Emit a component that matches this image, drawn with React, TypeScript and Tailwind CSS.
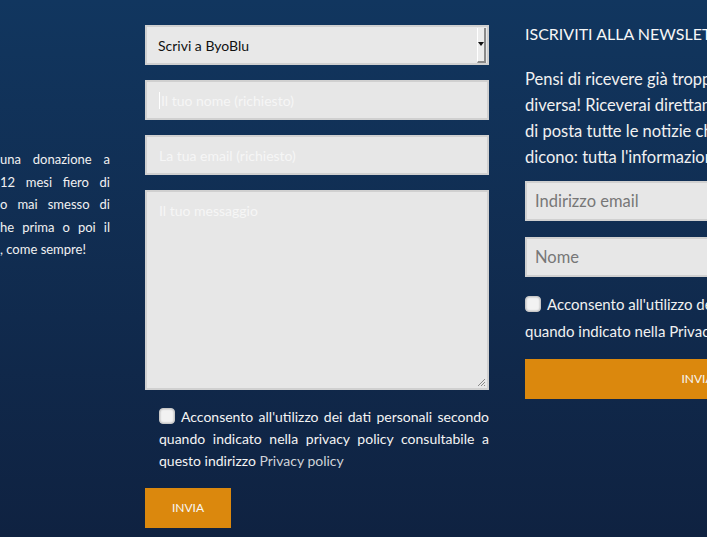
import React from "react";

const font = { fontFamily: "Lato, 'Open Sans', sans-serif" };

const Box = () => (
  <span className="inline-block w-[16px] h-[16px] rounded-[4px] bg-[#f2f2f2] border border-[#c8c8c8] shadow-[inset_0_0_2px_rgba(0,0,0,0.35)] align-[-2px] mr-[6px]" />
);

// each line: hidden start (runs off the left edge) + visible, justified end
const leftLines: [string, string[]][] = [
  ["Puoi sostenere Byoblu con", ["una", "donazione", "a"]],
  ["partire da pochi euro o per", ["12", "mesi", "fiero", "di"]],
  ["una voce libera che non h", ["o", "mai", "smesso", "di"]],
  ["informarti. Sappi anc", ["he", "prima", "o", "poi", "il"]],
];

const App = () => {
  return (
    <div
      className="w-[707px] h-[537px] overflow-hidden bg-gradient-to-b from-[#11365f] to-[#0f2241] text-white"
      style={font}
    >
      <div className="flex ml-[-150px]">
        {/* left column - donation text */}
        <div className="w-[260px] shrink-0 pt-[148px] text-[13px] leading-[22.5px] text-[#f1f1f1]">
          {leftLines.map(([pre, words]) => (
            <div key={pre} className="flex">
              <span className="w-[150px] whitespace-nowrap overflow-hidden text-right">{pre}</span>
              <span className="w-[110px] flex justify-between">
                {words.map((w, i) => (
                  <span key={i}>{w}</span>
                ))}
              </span>
            </div>
          ))}
          <div className="flex">
            <span className="w-[150px] whitespace-nowrap overflow-hidden text-right">tornerà a te</span>
            <span className="whitespace-nowrap">, come sempre!</span>
          </div>
        </div>

        {/* middle column - contact form */}
        <div className="ml-[35px] w-[344px] shrink-0 pt-[25px] flex flex-col">
          <div className="h-[40px] bg-[#e8e8e8] border-2 border-[#d0d0d0] flex items-center justify-between pl-[11px] pr-[1px]">
            <span className="text-[14px] text-[#111]">Scrivi a ByoBlu</span>
            <span className="w-[9px] h-[35px] bg-[#ececec] border-r-2 border-b-2 border-[#8a8a8a] border-l border-l-white flex items-center justify-center">
              <span className="w-0 h-0 border-l-[3px] border-r-[3px] border-t-[4px] border-l-transparent border-r-transparent border-t-[#111]" />
            </span>
          </div>
          <div className="mt-[15px] h-[40px] bg-[#e7e7e7] border-2 border-[#d0d0d0] flex items-center pl-[12px] text-[14px] text-[#f6f6f6]">
            <span className="w-[1px] h-[17px] bg-white mr-[1px]" />
            Il tuo nome (richiesto)
          </div>
          <div className="mt-[15px] h-[40px] bg-[#e7e7e7] border-2 border-[#d0d0d0] flex items-center pl-[12px] text-[14px] text-[#f6f6f6]">
            La tua email (richiesto)
          </div>
          <div className="mt-[15px] h-[200px] bg-[#e7e7e7] border-2 border-[#d0d0d0] pl-[12px] pt-[8px] text-[14px] text-[#f6f6f6] flex flex-col justify-between pr-[1px] pb-[1px]">
            <span>Il tuo messaggio</span>
            <svg className="self-end" width="10" height="10" viewBox="0 0 10 10">
              <path d="M9 2 L2 9 M9 5 L5 9 M9 8 L8 9" stroke="#8a8a8a" strokeWidth="1" />
            </svg>
          </div>
          <p className="mt-[16px] pl-[14px] text-[14px] leading-[22px] text-justify text-[#f4f4f4]">
            <Box />
            Acconsento all'utilizzo dei dati personali secondo quando indicato nella privacy policy consultabile a
            questo indirizzo <span className="text-[#cfd3d8]">Privacy policy</span>
          </p>
          <div className="mt-[16px] w-[86px] h-[40px] bg-[#db880d] flex items-center justify-center text-[12px] text-[#f6f6f6]">
            INVIA
          </div>
        </div>

        {/* right column - newsletter */}
        <div className="ml-[36px] w-[345px] shrink-0 pt-[24px]">
          <h3 className="text-[16px] leading-[20px] text-[#f6f6f6] whitespace-nowrap">ISCRIVITI ALLA NEWSLETTER</h3>
          <p className="mt-[22px] text-[16.5px] leading-[26px] text-[#f1f1f1] whitespace-nowrap">
            Pensi di ricevere già troppe email? La nostra è
            <br />
            diversa! Riceverai direttamente nella tua casella
            <br />
            di posta tutte le notizie che gli altri non ti
            <br />
            dicono: tutta l'informazione libera di Byoblu.
          </p>
          <div className="mt-[11px] h-[40px] bg-[#e7e7e7] border-2 border-[#d0d0d0] flex items-center pl-[8px] text-[16.5px] text-[#777]">
            Indirizzo email
          </div>
          <div className="mt-[16px] h-[40px] bg-[#e7e7e7] border-2 border-[#d0d0d0] flex items-center pl-[8px] text-[16.5px] text-[#777]">
            Nome
          </div>
          <p className="mt-[14px] text-[15px] leading-[27px] text-[#f1f1f1]">
            <Box />
            Acconsento all'utilizzo dei dati personali secondo quando indicato nella Privacy policy
          </p>
          <div className="mt-[14px] h-[40px] bg-[#db880d] flex items-center justify-center text-[12px] text-[#f6f6f6]">
            INVIA
          </div>
        </div>
      </div>
    </div>
  );
};

export default App;
